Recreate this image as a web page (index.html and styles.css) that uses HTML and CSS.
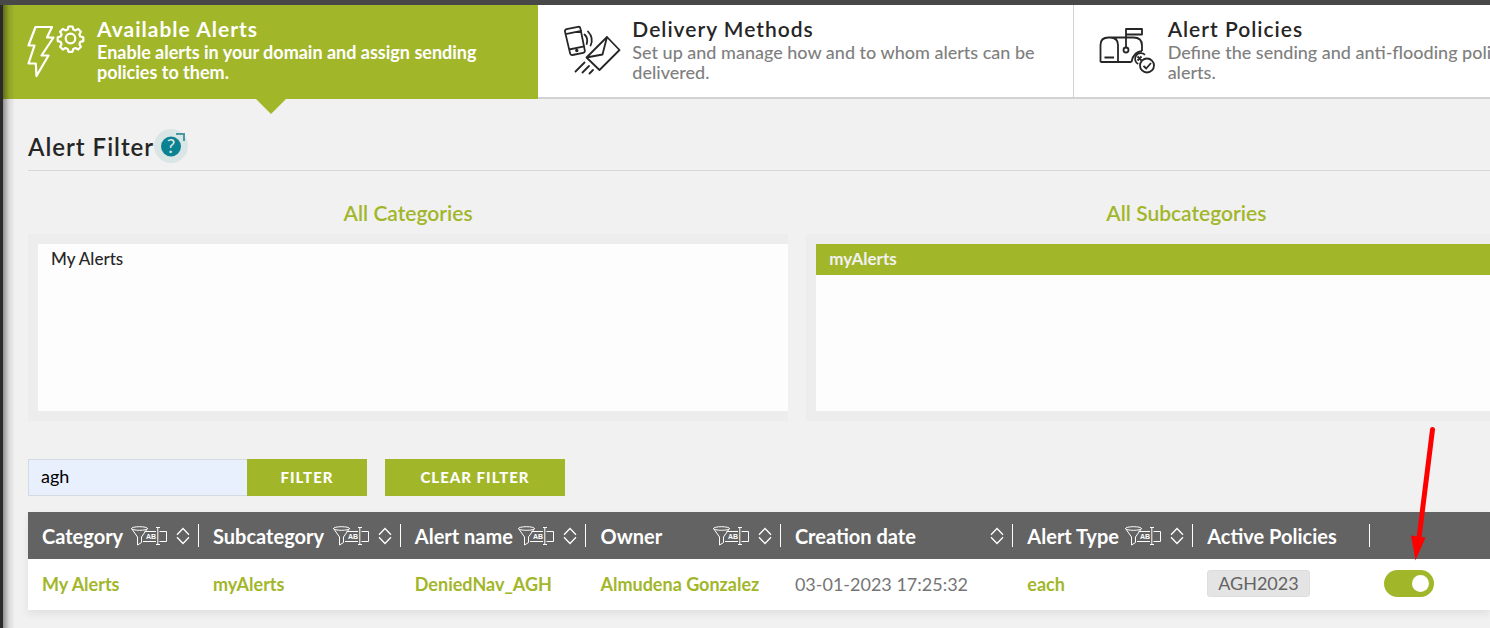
FILE: index.html
```html
<!DOCTYPE html>
<html lang="en">
<head>
    <meta charset="UTF-8">
    <meta name="viewport" content="width=device-width, initial-scale=1.0">
    <title>Alerts</title>
    <link rel="stylesheet" href="styles.css">
</head>
<body>
    <!-- shared icons -->
    <svg class="sprite" aria-hidden="true">
        <symbol id="icon-filter" viewBox="0 0 36 20">
            <g fill="none" stroke="#fff" stroke-width="1">
                <ellipse cx="8.500" cy="2.500" rx="8" ry="1.800"/>
                <path d="M.5 2.500 6.500 11v8l4-2.500V11l6-8.500"/>
                <path d="M13.500 5.500h11.500M12 15.500h13M28.500 5.500h7v10h-7"/>
                <path d="M26.800 2v16M25 1.500h4M25 18.500h4"/>
            </g>
            <text x="15" y="13" fill="#fff" font-family="Liberation Sans, sans-serif" font-size="7" font-weight="700">AB</text>
        </symbol>
        <symbol id="icon-sort" viewBox="0 0 14 18">
            <path d="M1 7.800 7 1.500l6 6.300M1 10.200l6 6.300 6-6.300" fill="none" stroke="#fff" stroke-width="1.300"/>
        </symbol>
    </svg>

    <div class="page">
        <nav class="tabs">
            <a class="tab active" href="#available">
                <svg class="tab-icon" viewBox="0 0 60 56" fill="none" stroke="currentColor" stroke-width="2.200" stroke-linejoin="round" stroke-linecap="round">
                    <path d="M8.500 4h16.500L20 14.500h6.500L14.500 32.500h7L9.500 53 8.800 40.500H1.500L7.500 22.500H1.500z"/>
                    <circle cx="43.500" cy="15.500" r="4.800"/>
                    <path d="M41.500 3.500h4l.8 3 2.200.9 2.700-1.500 2.700 2.800-1.500 2.600.9 2.200 3 .8v3.800l-3 .8-.9 2.200 1.500 2.700-2.700 2.700-2.700-1.500-2.200.9-.8 2.900h-4l-.8-2.900-2.200-.9-2.700 1.500-2.700-2.700 1.500-2.700-.9-2.200-3-.8v-3.800l3-.8.9-2.200-1.500-2.600 2.700-2.800 2.700 1.500 2.200-.9z"/>
                </svg>
                <span class="tab-text">
                    <strong>Available Alerts</strong>
                    <span>Enable alerts in your domain and assign sending<br>policies to them.</span>
                </span>
            </a>
            <a class="tab" href="#delivery">
                <svg class="tab-icon" viewBox="0 0 60 56" fill="none" stroke="currentColor" stroke-width="1.800" stroke-linejoin="round" stroke-linecap="round">
                    <path d="M4.500 6.200 16 3.800q2-.3 2.400 1.600l4.400 22q.3 2-1.600 2.400L10.500 32q-2 .3-2.400-1.600L3 8.600q-.2-2 1.500-2.400zM3.500 11.200l15.800-3.300M7.200 26.500l15-3.200"/>
                    <circle cx="14.800" cy="27.500" r=".8"/>
                    <path d="M22.500 11.500q4 3.500 2.200 9.500M26 8.500q6 6.500 2.600 14"/>
                    <path d="M45 14 57.500 27 37.500 47 24.500 34.500zM45 14l-4.500 17.500L24.500 34.500"/>
                    <path d="M22.500 39.500 13.500 48.500M27 43l-6.500 6.500M31 47l-3.500 3.500"/>
                </svg>
                <span class="tab-text">
                    <strong>Delivery Methods</strong>
                    <span>Set up and manage how and to whom alerts can be<br>delivered.</span>
                </span>
            </a>
            <a class="tab" href="#policies">
                <svg class="tab-icon" viewBox="0 0 60 56" fill="none" stroke="currentColor" stroke-width="1.800" stroke-linejoin="round">
                    <path d="M2.500 39V22q0-7.500 8-7.500h25q8.500 0 8.500 8v5.500M2.500 39H33.500M20 39V22q0-7.500-8-7.500M6.500 34.500h9.500"/>
                    <path d="M28 25V6h16v5.500H28"/>
                    <circle cx="28" cy="27" r="2.500"/>
                    <path d="M44 28q-9 1-10.500 11"/>
                    <path d="M47 31.800a5.800 5.800 0 1 0-6.800 9.200M39.500 33.500l4 4m-4 0 4-4"/>
                    <circle cx="49" cy="42.500" r="7"/>
                    <path d="M45.500 42.800l2.700 2.700 4.800-5.500"/>
                </svg>
                <span class="tab-text">
                    <strong>Alert Policies</strong>
                    <span>Define the sending and anti-flooding policies of your<br>alerts.</span>
                </span>
            </a>
        </nav>

        <main>
            <header class="title">
                <h1>Alert Filter</h1>
                <a class="help" href="#help" aria-label="Help">
                    <svg viewBox="0 0 34 34">
                        <circle cx="17" cy="17.500" r="10" fill="#0b8291"/>
                        <path d="M22 5h8v7" fill="none" stroke="#4c99a3" stroke-width="2"/>
                        <text x="17" y="24" text-anchor="middle" fill="#dfe9ea" font-family="Lato, sans-serif" font-size="19">?</text>
                    </svg>
                </a>
            </header>

            <div class="lists">
                <section>
                    <h2>All Categories</h2>
                    <ul>
                        <li><button type="button">My Alerts</button></li>
                    </ul>
                </section>
                <section>
                    <h2>All Subcategories</h2>
                    <ul>
                        <li><button type="button" class="selected">myAlerts</button></li>
                    </ul>
                </section>
            </div>

            <form class="search">
                <input type="text" name="search" value="agh" aria-label="Search alerts">
                <button type="submit">FILTER</button>
                <button type="reset" class="clear">CLEAR FILTER</button>
            </form>

            <table>
                <colgroup>
                    <col class="c-category">
                    <col class="c-subcategory">
                    <col class="c-name">
                    <col class="c-owner">
                    <col class="c-date">
                    <col class="c-type">
                    <col class="c-policies">
                    <col>
                </colgroup>
                <thead>
                    <tr>
                        <th><div>Category <button type="button" class="filter" aria-label="Filter"><svg><use href="#icon-filter"/></svg></button><button type="button" class="sort" aria-label="Sort"><svg><use href="#icon-sort"/></svg></button></div></th>
                        <th><div>Subcategory <button type="button" class="filter" aria-label="Filter"><svg><use href="#icon-filter"/></svg></button><button type="button" class="sort" aria-label="Sort"><svg><use href="#icon-sort"/></svg></button></div></th>
                        <th><div>Alert name <button type="button" class="filter" aria-label="Filter"><svg><use href="#icon-filter"/></svg></button><button type="button" class="sort" aria-label="Sort"><svg><use href="#icon-sort"/></svg></button></div></th>
                        <th><div>Owner <button type="button" class="filter" aria-label="Filter"><svg><use href="#icon-filter"/></svg></button><button type="button" class="sort" aria-label="Sort"><svg><use href="#icon-sort"/></svg></button></div></th>
                        <th><div>Creation date <button type="button" class="sort" aria-label="Sort"><svg><use href="#icon-sort"/></svg></button></div></th>
                        <th><div>Alert Type <button type="button" class="filter" aria-label="Filter"><svg><use href="#icon-filter"/></svg></button><button type="button" class="sort" aria-label="Sort"><svg><use href="#icon-sort"/></svg></button></div></th>
                        <th><div>Active Policies</div></th>
                        <th></th>
                    </tr>
                </thead>
                <tbody>
                    <tr>
                        <td><a href="#alert">My Alerts</a></td>
                        <td><a href="#alert">myAlerts</a></td>
                        <td><a href="#alert">DeniedNav_AGH</a></td>
                        <td><a href="#alert">Almudena Gonzalez</a></td>
                        <td>03-01-2023 17:25:32</td>
                        <td><a href="#alert">each</a></td>
                        <td><span class="badge">AGH2023</span></td>
                        <td>
                            <div class="toggle">
                                <input type="checkbox" aria-label="Alert enabled" checked>
                                <svg class="arrow" viewBox="0 0 30 136">
                                    <path d="M22.500 4.500 9 113" stroke="#f00" stroke-width="5" stroke-linecap="round"/>
                                    <path d="M1 110.500 15.500 112.500 5.500 135.500z" fill="#f00"/>
                                </svg>
                            </div>
                        </td>
                    </tr>
                </tbody>
            </table>
        </main>
    </div>
</body>
</html>
```
FILE: styles.css
```css
*{
    box-sizing: border-box;
}
body{
    margin: 0;
    min-height: 100vh;
    display: flex;
    overflow-x: hidden;
    font-family: Lato, sans-serif;
    font-size: 18px;
    color: #262626;
    background-color: #2b2b2b;
    border-top: 5px solid #484848;
    padding-left: 3px;
}
a{
    text-decoration: none;
}
button{
    font-family: inherit;
    font-size: inherit;
    border: none;
    padding: 0;
    cursor: pointer;
}
.sprite{
    position: absolute;
    width: 0;
    height: 0;
}
.page{
    position: relative;
    flex: 1;
    min-width: 0;
    overflow: hidden;
    background-color: #f1f1f1;
}
/* shade along the side menu */
.page::before{
    content: "";
    position: absolute;
    z-index: 1;
    top: 0;
    bottom: 0;
    left: 0;
    width: 12px;
    background: linear-gradient(to right, rgba(0, 0, 0, .4), rgba(0, 0, 0, .1) 50%, transparent);
    pointer-events: none;
}

/* tabs */
.tabs{
    display: flex;
}
.tab{
    position: relative;
    flex: 0 0 36%;
    display: flex;
    gap: 10px;
    height: 94px;
    padding: 14px 0 0 24px;
    white-space: nowrap;
    color: #262626;
    background-color: #fff;
    border-right: 1px solid #d2d2d2;
    border-bottom: 2px solid #d2d2d2;
}
.tab.active{
    color: #fff;
    background-color: #a2b62a;
    border: none;
}
.tab.active::after{
    content: "";
    position: absolute;
    top: 100%;
    left: 50%;
    margin-left: -15px;
    border: 15px solid transparent;
    border-top-color: #a2b62a;
    border-bottom: none;
}
.tab-icon{
    flex: none;
    width: 60px;
    height: 56px;
    margin-top: 4px;
}
.tab-text{
    line-height: 20px;
    font-weight: 500;
    color: #808080;
}
.tab-text strong{
    display: block;
    margin-bottom: 3px;
    font-size: 21px;
    font-weight: 600;
    letter-spacing: 1px;
    color: #262626;
}
.active .tab-text{
    font-weight: 700;
}
.active .tab-text,
.active .tab-text strong{
    color: #fff;
}
.active .tab-text strong{
    font-weight: 700;
}

main{
    padding-left: 25px;
}
.title{
    display: flex;
    align-items: center;
    height: 72px;
    padding-top: 23px;
    border-bottom: 1px solid #d8d8d8;
}
h1{
    margin: 0;
    font-size: 24px;
    font-weight: 600;
    letter-spacing: 1px;
}
.help{
    width: 34px;
    height: 34px;
    border-radius: 50%;
    background-color: #dae5e6;
}
.help svg{
    display: block;
}

/* category lists */
.lists{
    display: grid;
    grid-template-columns: 52% 52%;
    gap: 18px;
    padding-top: 29px;
}
h2{
    margin: 0 0 8px;
    line-height: 26px;
    font-size: 21px;
    font-weight: 600;
    text-align: center;
    color: #a2b62a;
}
ul{
    list-style: none;
    margin: 0;
    padding: 0;
    height: 187px;
    border: 10px solid #ededed;
    border-right: none;
    background-color: #fdfdfd;
}
li button{
    width: 100%;
    height: 31px;
    padding: 0 0 3px 13px;
    font-size: 17px;
    font-weight: 500;
    text-align: left;
    color: #262626;
    background: none;
}
li .selected{
    color: #f1f1f1;
    font-weight: 700;
    background-color: #a2b62a;
}

/* search row */
.search{
    display: flex;
    height: 37px;
    margin: 38px 0 16px;
}
.search input{
    width: 219px;
    padding: 0 12px 4px;
    font-family: inherit;
    font-size: 18px;
    border: 1px solid #d5d9e2;
    border-right: none;
    background-color: #e8f0fe;
}
.search button{
    width: 120px;
    padding-bottom: 2px;
    font-size: 15px;
    font-weight: 900;
    letter-spacing: 1px;
    color: #fff;
    background-color: #a2b62a;
}
.search .clear{
    width: 180px;
    margin-left: 18px;
}

/* alerts table */
table{
    width: 100%;
    table-layout: fixed;
    border-collapse: collapse;
    white-space: nowrap;
    box-shadow: 0 4px 8px rgba(0, 0, 0, .07);
}
.c-category{ width: 11.7%; }
.c-subcategory{ width: 13.8%; }
.c-name{ width: 12.7%; }
.c-owner{ width: 13.3%; }
.c-date{ width: 15.9%; }
.c-type{ width: 12.3%; }
.c-policies{ width: 12.1%; }
th{
    height: 47px;
    padding: 0;
    font-size: 20px;
    text-align: left;
    color: #fff;
    background-color: #636363;
}
th div{
    display: flex;
    align-items: center;
    height: 23px;
    padding: 0 8px 0 14px;
    border-right: 1px solid #fff;
}
th button{
    background: none;
}
th svg{
    display: block;
    width: 100%;
    height: 100%;
}
.filter{
    width: 36px;
    height: 20px;
    margin-left: auto;
}
.sort{
    width: 14px;
    height: 18px;
    margin-left: 9px;
}
th .sort:only-child{
    margin-left: auto;
}
td{
    height: 51px;
    padding: 0 0 2px 14px;
    color: #757575;
    background-color: #fff;
}
td a{
    font-weight: 700;
    color: #a2b62a;
}
.badge{
    display: inline-block;
    padding: 0 10px;
    line-height: 25px;
    border: 1px solid #dedede;
    border-radius: 3px;
    color: #636363;
    background-color: #e4e4e4;
}
.toggle{
    position: relative;
    width: 50px;
    height: 27px;
}
.toggle input{
    appearance: none;
    display: flex;
    align-items: center;
    justify-content: flex-end;
    width: 50px;
    height: 27px;
    margin: 0;
    padding-right: 5px;
    border-radius: 14px;
    background-color: #a2b62a;
}
.toggle input::before{
    content: "";
    width: 17px;
    height: 17px;
    border-radius: 50%;
    background-color: #fff;
}
.arrow{
    position: absolute;
    bottom: 36px;
    left: 26px;
    width: 30px;
    height: 136px;
}
```
